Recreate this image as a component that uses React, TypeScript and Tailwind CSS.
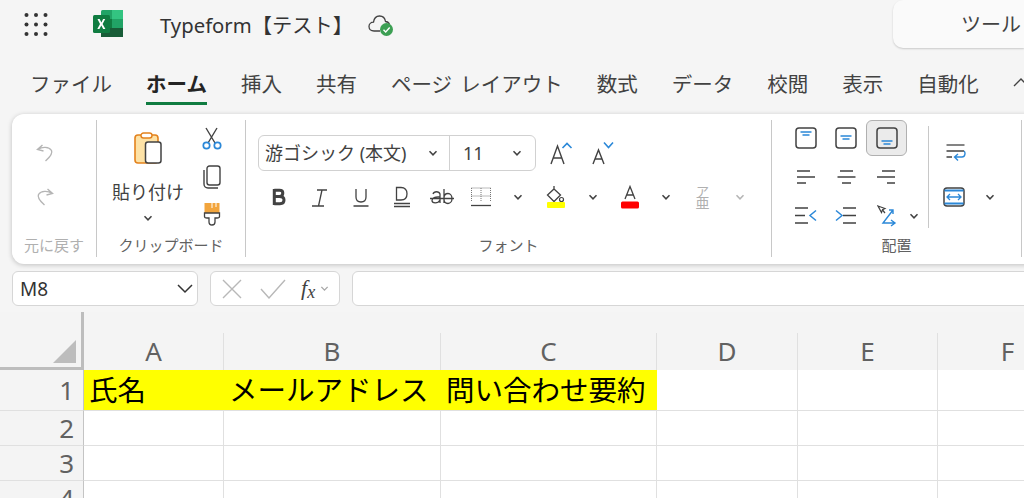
import type { ReactNode } from 'react';

const DARK = '#424242';
const BLUE = '#2b88d8';

function Chevron({ color = DARK, size = 10 }: { color?: string; size?: number }) {
  return (
    <svg width={size} height={size} viewBox="0 0 10 10" fill="none" stroke={color} strokeWidth="1.5">
      <path d="M1.5 3.2 L5 6.8 L8.5 3.2" />
    </svg>
  );
}

function Waffle() {
  const spots = [0, 1, 2];
  return (
    <svg width="24" height="24" viewBox="0 0 24 24" fill="#333">
      {spots.map((row) =>
        spots.map((col) => <circle key={`${row}-${col}`} cx={2.5 + col * 9.5} cy={3 + row * 9.5} r="2" />)
      )}
    </svg>
  );
}

function ExcelLogo() {
  return (
    <svg width="30" height="28" viewBox="0 0 30 28">
      <rect x="8" y="0" width="22" height="27" rx="1.5" fill="#21a366" />
      <rect x="19" y="0" width="11" height="9" fill="#33c481" />
      <rect x="19" y="9" width="11" height="9" fill="#21a366" />
      <rect x="8" y="9" width="11" height="9" fill="#107c41" />
      <rect x="8" y="18" width="22" height="9" fill="#185c37" />
      <rect x="0" y="5" width="17" height="18" rx="1.5" fill="#107c41" />
      <path d="M4.5 9 L7 14 L4.3 19 H6.4 L8.3 15.6 L10.2 19 H12.4 L9.6 14 L12.2 9 H10.1 L8.4 12.4 L6.6 9 Z" fill="#fff" />
    </svg>
  );
}

function CloudCheck() {
  return (
    <svg width="26" height="24" viewBox="0 0 26 24" fill="none">
      <path
        d="M12 18 H6 C3 18 1 16 1 13.5 C1 11 3 9.2 5.5 9.2 C6 5.5 8.5 3 11.5 3 C14.5 3 17 5.2 17.5 8.5 C19.5 8.7 21 10 21.5 11.5"
        stroke="#424242"
        strokeWidth="1.3"
      />
      <circle cx="18.5" cy="16.5" r="6.5" fill="#3c9f53" />
      <path d="M15.5 16.7 L17.7 18.9 L21.7 14.6" stroke="#fff" strokeWidth="1.4" />
    </svg>
  );
}

function Undo({ flip = false }: { flip?: boolean }) {
  return (
    <svg width="20" height="20" viewBox="0 0 20 20" fill="none" stroke="#b5b5b5" strokeWidth="1.4" className={flip ? '-scale-x-100' : ''}>
      <path d="M7.5 2 L2.5 6.5 L8.5 8 M3 6.5 C7 3.5 14 3.5 16.5 7.5 C18 10.5 15 14 10.5 18" />
    </svg>
  );
}

function PasteIcon() {
  return (
    <svg width="28" height="32" viewBox="0 0 28 32" fill="none">
      <rect x="1" y="3" width="23" height="28" rx="3" fill="#fde2a6" stroke="#e3821d" strokeWidth="1.6" />
      <rect x="7" y="1" width="11" height="5" rx="2.5" fill="#fff" stroke="#e3821d" strokeWidth="1.4" />
      <rect x="11.5" y="10" width="15.5" height="21" rx="2.5" fill="#fff" stroke="#424242" strokeWidth="1.5" />
    </svg>
  );
}

function ScissorsIcon() {
  return (
    <svg width="20" height="24" viewBox="0 0 20 24" fill="none">
      <path d="M4 1 L13 16 M15 1 L6 16" stroke="#424242" strokeWidth="1.4" />
      <circle cx="4.5" cy="18.5" r="3.2" stroke={BLUE} strokeWidth="1.7" />
      <circle cx="15.5" cy="18.5" r="3.2" stroke={BLUE} strokeWidth="1.7" />
    </svg>
  );
}

function CopyIcon() {
  return (
    <svg width="20" height="24" viewBox="0 0 20 24" fill="none" stroke="#424242" strokeWidth="1.4">
      <rect x="5" y="1" width="13" height="19" rx="2.5" />
      <path d="M2 5 V19 C2 21 3.5 23 6 23 H16" />
    </svg>
  );
}

function BrushIcon() {
  return (
    <svg width="18" height="24" viewBox="0 0 18 24" fill="none">
      <path d="M1.5 1 H16.5 V11 H1.5 Z" fill="#f2a53d" />
      <path d="M9 1 V6 M13 1 V5" stroke="#fff" strokeWidth="1" />
      <path d="M1.5 11 H16.5 V14.5 C16.5 15.5 15.5 16 14 16 H12 V20 C12 22 10.5 23 9 23 C7.5 23 6 22 6 20 V16 H4 C2.5 16 1.5 15.5 1.5 14.5 Z" fill="#fff" stroke="#424242" strokeWidth="1.3" />
    </svg>
  );
}

function BoldIcon() {
  return (
    <svg width="14" height="18" viewBox="0 0 14 18" fill="none" stroke="#424242" strokeWidth="3">
      <path d="M2.3 1 V17 M2.3 2.3 H7.5 C10 2.3 10.8 3.5 10.8 5 C10.8 7 9.8 8.5 7.5 8.5 H2.3 M7.5 8.5 C10.5 8.5 12 10 12 12 C12 14.5 10.5 15.7 8 15.7 H2.3" />
    </svg>
  );
}

function ItalicIcon() {
  return (
    <svg width="18" height="20" viewBox="0 0 18 20" fill="none" stroke="#424242" strokeWidth="1.3">
      <path d="M1 19 H13 M6 3 H16 M11 3 L7.5 19" />
    </svg>
  );
}

function UnderlineIcon() {
  return (
    <svg width="16" height="20" viewBox="0 0 16 20" fill="none" stroke="#424242" strokeWidth="1.3">
      <path d="M3 2 V10 C3 13 5 15 8 15 C11 15 13 13 13 10 V2 M0.5 19 H15.5" />
    </svg>
  );
}

function DoubleUnderlineIcon() {
  return (
    <svg width="18" height="22" viewBox="0 0 18 22" fill="none" stroke="#424242" strokeWidth="1.3">
      <path d="M3.5 1.5 V14 H8 C12 14 14 11.5 14 7.7 C14 4 12 1.5 8 1.5 Z M1 17.5 H17 M1 20.5 H17" />
    </svg>
  );
}

function StrikeIcon() {
  return (
    <svg width="24" height="20" viewBox="0 0 24 20" fill="none" stroke="#424242" strokeWidth="1.3">
      <path d="M3 7 C4 4 9 4 10 7 V16 M10 10 C5 9.5 2 11 2 13.5 C2 16.5 8 17 10 13 M14 2 V16 M14 11 C14 8 16 6.5 18 6.5 C20.5 6.5 22 9 22 11.5 C22 14 20.5 16.5 18 16.5 C16 16.5 14 15 14 12 M0 11.5 H24" />
    </svg>
  );
}

function BorderIcon() {
  return (
    <svg width="20" height="20" viewBox="0 0 20 20" fill="none" stroke="#777">
      <path d="M0.5 1 H19.5 M0.5 9 H19.5 M0.5 1 V15 M10 1 V15 M19.5 1 V15" strokeDasharray="1 1" strokeWidth="1" />
      <path d="M0 18.5 H20" stroke="#424242" strokeWidth="1.3" />
    </svg>
  );
}

function FillIcon() {
  return (
    <svg width="20" height="24" viewBox="0 0 20 24" fill="none">
      <path d="M8 1 V4 M8 4 L14.5 10 L8 16.5 L1.5 10 Z" stroke="#424242" strokeWidth="1.3" />
      <circle cx="15.5" cy="14.5" r="2" stroke="#424242" strokeWidth="1.2" />
      <rect x="1" y="17" width="18" height="6" rx="1" fill="#ffff00" />
    </svg>
  );
}

function FontColorIcon() {
  return (
    <svg width="20" height="24" viewBox="0 0 20 24" fill="none">
      <path d="M5 14 L10 1.5 L15 14 M6.5 10 H13.5" stroke="#424242" strokeWidth="1.3" />
      <rect x="1" y="16.5" width="18" height="7" rx="1.5" fill="#ff0000" />
    </svg>
  );
}

function Growth({ up }: { up: boolean }) {
  return (
    <svg width="24" height="24" viewBox="0 0 24 24" fill="none">
      {up ? (
        <path d="M2 23 L8.5 5 L15 23 M4.5 17 H12.5" stroke="#424242" strokeWidth="1.4" />
      ) : (
        <path d="M3 23 L8.5 9 L14 23 M5 18 H12" stroke="#424242" strokeWidth="1.4" />
      )}
      {up ? (
        <path d="M13.5 7 L18 2.5 L22.5 7" stroke={BLUE} strokeWidth="1.6" />
      ) : (
        <path d="M14 1.5 L18.5 6.5 L23 1.5" stroke={BLUE} strokeWidth="1.6" />
      )}
    </svg>
  );
}

function VerticalAlign({ pos }: { pos: 'top' | 'middle' | 'bottom' }) {
  const lineY = pos === 'top' ? 5 : pos === 'middle' ? 9 : 14;
  return (
    <svg width="22" height="22" viewBox="0 0 22 22" fill="none">
      <rect x="1" y="1" width="20" height="20" rx="3" stroke="#424242" strokeWidth="1.5" />
      <path d={`M5.5 ${lineY} H16.5 M7.5 ${lineY + 3} H14.5`} stroke={BLUE} strokeWidth="1.3" />
    </svg>
  );
}

function HorizontalAlign({ pos }: { pos: 'left' | 'center' | 'right' }) {
  const d =
    pos === 'left'
      ? 'M1 1 H14 M1 7 H19 M1 13 H10'
      : pos === 'center'
      ? 'M3 1 H16 M0.5 7 H18.5 M5 13 H14'
      : 'M5 1 H18 M0 7 H18 M10 13 H18';
  return (
    <svg width="19" height="14" viewBox="0 0 19 14" fill="none" stroke="#424242" strokeWidth="1.3">
      <path d={d} />
    </svg>
  );
}

function Indent({ more }: { more: boolean }) {
  return (
    <svg width="22" height="18" viewBox="0 0 22 18" fill="none">
      {more ? (
        <>
          <path d="M8 1 H21 M8 8.5 H21 M8 16 H21" stroke="#424242" strokeWidth="1.3" />
          <path d="M1 3.5 L7 8.5 L1 13.5" stroke={BLUE} strokeWidth="1.5" />
        </>
      ) : (
        <>
          <path d="M0 1 H13 M0 8.5 H10 M0 16 H13" stroke="#424242" strokeWidth="1.3" />
          <path d="M21 3.5 L15 8.5 L21 13.5" stroke={BLUE} strokeWidth="1.5" />
        </>
      )}
    </svg>
  );
}

function OrientationIcon() {
  return (
    <svg width="20" height="22" viewBox="0 0 20 22" fill="none">
      <path d="M1 1 L8 3.5 L5.5 4.8 L4.5 7.5 Z" stroke="#424242" strokeWidth="1.2" />
      <path d="M5.5 5 L8 8" stroke="#424242" strokeWidth="1.2" />
      <path d="M16 5 L6 18 H18 M14 15 L18 18 L14 21 M12 5 H16 V9" stroke={BLUE} strokeWidth="1.4" />
    </svg>
  );
}

function WrapIcon() {
  return (
    <svg width="20" height="18" viewBox="0 0 20 18" fill="none">
      <path d="M0.5 1 H18.5" stroke="#424242" strokeWidth="1.3" />
      <path d="M0.5 7 H18 M0.5 13 H6" stroke="#424242" strokeWidth="1.3" />
      <path d="M18 7 C19.5 8 19.5 13 16 13 H9 M12 10 L8.5 13 L12 16.5" stroke={BLUE} strokeWidth="1.4" />
    </svg>
  );
}

function MergeIcon() {
  return (
    <svg width="22" height="20" viewBox="0 0 22 20" fill="none">
      <rect x="1" y="1" width="20" height="18" rx="3" stroke="#424242" strokeWidth="1.5" />
      <path d="M1.5 3.5 H20.5 M1.5 16.5 H20.5" stroke={BLUE} strokeWidth="2" />
      <path d="M4 10 H18 M7 7 L4 10 L7 13 M15 7 L18 10 L15 13" stroke={BLUE} strokeWidth="1.3" />
    </svg>
  );
}

function Btn({ w, children }: { w: string; children: ReactNode }) {
  return <div className={`${w} h-9 flex shrink-0 items-center justify-center`}>{children}</div>;
}

function GroupLabel({ children, color = 'text-[#616161]' }: { children: ReactNode; color?: string }) {
  return <div className={`h-6 mt-auto text-center text-[15px] leading-6 ${color}`}>{children}</div>;
}

const tabs = ['ファイル', 'ホーム', '挿入', '共有', 'ページ レイアウト', '数式', 'データ', '校閲', '表示', '自動化'];

const columns = [
  { name: 'A', text: '氏名' },
  { name: 'B', text: 'メールアドレス' },
  { name: 'C', text: '問い合わせ要約' },
  { name: 'D', text: '' },
  { name: 'E', text: '' },
  { name: 'F', text: '' },
];

const rowHeaderClass = 'border-r border-b border-r-[#c4c4c4] border-b-[#e0e0e0] bg-[#f4f4f4] pr-[9px] text-right text-[26px] text-[#616161]';

export default function App() {
  return (
    <div className="w-[1024px] h-[498px] overflow-hidden bg-[#f5f5f5] flex flex-col [font-family:'Noto_Sans','Noto_Sans_CJK_JP',sans-serif]">
      {/* Title bar */}
      <div className="h-[50px] flex shrink-0 items-start">
        <div className="ml-6 mt-[12px]">
          <Waffle />
        </div>
        <div className="ml-[45px] mt-[10px]">
          <ExcelLogo />
        </div>
        <div className="ml-[37px] mt-[10px] text-[20.3px] leading-[31px] text-[#333]">Typeform【テスト】</div>
        <div className="ml-[15px] mt-[13px]">
          <CloudCheck />
        </div>
        <div className="ml-auto w-[131px] h-[48px] shrink-0 rounded-l-[10px] bg-[#fafafa] shadow-[0_1px_2px_rgba(0,0,0,0.18)] pl-[68px] text-[20px] leading-[50px] whitespace-nowrap text-[#424242]">
          ツール
        </div>
      </div>

      {/* Tabs */}
      <div className="h-[64px] flex shrink-0 items-start gap-[34px] pl-[30px] pt-[19px] whitespace-nowrap">
        {tabs.map((tab) => (
          <div
            key={tab}
            className={
              tab === 'ホーム'
                ? 'h-9 border-b-[3px] border-[#107c41] text-[20.5px] leading-[30px] font-bold text-[#242424]'
                : 'h-9 border-b-[3px] border-transparent text-[20.5px] leading-[30px] [word-spacing:3px] text-[#424242]'
            }
          >
            {tab}
          </div>
        ))}
        <div className="pt-[9px]">
          <svg width="16" height="10" viewBox="0 0 16 10" fill="none" stroke="#424242" strokeWidth="1.4">
            <path d="M1 8 L8 1 L15 8" />
          </svg>
        </div>
      </div>

      {/* Ribbon */}
      <div className="ml-3 w-[1100px] h-[150px] shrink-0 flex rounded-[12px] bg-white py-[6px] shadow-[0_1px_5px_rgba(0,0,0,0.22)]">
        <div className="w-[85px] h-[137px] shrink-0 flex flex-col border-r border-[#c8c8c8]">
          <div className="w-[66px] pt-[15px] flex flex-col gap-2">
            <Btn w="w-full">
              <Undo />
            </Btn>
            <Btn w="w-full">
              <Undo flip />
            </Btn>
          </div>
          <GroupLabel color="text-[#b0b0b0]">元に戻す</GroupLabel>
        </div>

        <div className="w-[149px] h-[137px] shrink-0 flex flex-col border-r border-[#c8c8c8]">
          <div className="h-[113px] flex">
            <div className="w-[102px] pt-[12px] flex flex-col items-center">
              <PasteIcon />
              <div className="mt-[15px] text-[18px] leading-[27px] whitespace-nowrap text-[#424242]">貼り付け</div>
              <div className="mt-[7px]">
                <Chevron />
              </div>
            </div>
            <div className="w-[36px] ml-[-5px] flex flex-col items-center">
              <div className="h-[38px] flex items-center">
                <ScissorsIcon />
              </div>
              <div className="h-[38px] flex items-center">
                <CopyIcon />
              </div>
              <div className="h-[38px] flex items-center">
                <BrushIcon />
              </div>
            </div>
          </div>
          <GroupLabel>クリップボード</GroupLabel>
        </div>

        <div className="w-[526px] h-[137px] shrink-0 flex flex-col border-r border-[#c8c8c8]">
          <div className="pl-3 pt-[15px] flex">
            <div className="w-[278px] h-9 shrink-0 flex items-center rounded-[6px] border border-[#d1d1d1]">
              <div className="w-[191px] h-full shrink-0 flex items-center border-r border-[#d1d1d1] pl-[6px] pr-[11px]">
                <span className="text-[18px] leading-6 whitespace-nowrap text-[#424242]">游ゴシック (本文)</span>
                <span className="ml-auto">
                  <Chevron />
                </span>
              </div>
              <div className="flex-1 flex items-center pl-[13px] pr-[13px]">
                <span className="text-[18px] leading-6 text-[#424242]">11</span>
                <span className="ml-auto">
                  <Chevron />
                </span>
              </div>
            </div>
            <div className="ml-[5px] w-10 h-9 flex items-center justify-center">
              <Growth up />
            </div>
            <div className="ml-px w-10 h-9 flex items-center justify-center">
              <Growth up={false} />
            </div>
          </div>
          <div className="pl-3 mt-2 flex">
            <Btn w="w-[41px]">
              <BoldIcon />
            </Btn>
            <Btn w="w-[41px]">
              <ItalicIcon />
            </Btn>
            <Btn w="w-[41px]">
              <UnderlineIcon />
            </Btn>
            <Btn w="w-[41px]">
              <DoubleUnderlineIcon />
            </Btn>
            <Btn w="w-[40px]">
              <StrikeIcon />
            </Btn>
            <Btn w="w-[37px]">
              <BorderIcon />
            </Btn>
            <Btn w="w-[38px]">
              <Chevron />
            </Btn>
            <Btn w="w-[37px]">
              <FillIcon />
            </Btn>
            <Btn w="w-[37px]">
              <Chevron />
            </Btn>
            <Btn w="w-[37px]">
              <FontColorIcon />
            </Btn>
            <Btn w="w-[36px]">
              <Chevron />
            </Btn>
            <Btn w="w-[37px]">
              <div className="flex flex-col items-center text-[#b0b0b0]">
                <span className="h-[12px] text-[13px] leading-[12px]">ア</span>
                <span className="h-[12px] text-[14px] leading-[12px]">亜</span>
              </div>
            </Btn>
            <Btn w="w-[38px]">
              <Chevron color="#b5b5b5" />
            </Btn>
          </div>
          <GroupLabel>フォント</GroupLabel>
        </div>

        <div className="w-[250px] h-[137px] shrink-0 flex flex-col border-r border-[#c8c8c8]">
          <div className="h-[113px] flex">
            <div className="w-[156px] shrink-0 pl-[13px] flex flex-col gap-[3px]">
              <div className="flex">
                <Btn w="w-[41px]">
                  <VerticalAlign pos="top" />
                </Btn>
                <Btn w="w-[40px]">
                  <VerticalAlign pos="middle" />
                </Btn>
                <div className="w-[41px] h-9 flex items-center justify-center rounded-[6px] border border-[#b0b0b0] bg-[#ebebeb]">
                  <VerticalAlign pos="bottom" />
                </div>
              </div>
              <div className="flex">
                <Btn w="w-[41px]">
                  <HorizontalAlign pos="left" />
                </Btn>
                <Btn w="w-[40px]">
                  <HorizontalAlign pos="center" />
                </Btn>
                <Btn w="w-[41px]">
                  <HorizontalAlign pos="right" />
                </Btn>
              </div>
              <div className="flex h-[35px]">
                <Btn w="w-[41px]">
                  <Indent more={false} />
                </Btn>
                <Btn w="w-[40px]">
                  <Indent more />
                </Btn>
                <Btn w="w-[41px]">
                  <OrientationIcon />
                </Btn>
                <Btn w="w-[13px]">
                  <Chevron />
                </Btn>
              </div>
            </div>
            <div className="w-px h-[102px] mt-[6px] shrink-0 bg-[#c8c8c8]" />
            <div className="pt-[15px] flex flex-col gap-2">
              <Btn w="w-[54px]">
                <WrapIcon />
              </Btn>
              <div className="flex">
                <Btn w="w-[50px]">
                  <MergeIcon />
                </Btn>
                <Btn w="w-[22px]">
                  <Chevron />
                </Btn>
              </div>
            </div>
          </div>
          <GroupLabel>配置</GroupLabel>
        </div>
      </div>

      {/* Formula bar */}
      <div className="mt-[7px] h-[35px] shrink-0 flex gap-3 pl-3">
        <div className="w-[186px] shrink-0 flex items-center justify-between rounded-[6px] border border-[#d6d6d6] bg-white pl-[7px] pr-[2px]">
          <span className="text-[19px] leading-6 text-[#333]">M8</span>
          <svg width="20" height="12" viewBox="0 0 20 12" fill="none" stroke="#333" strokeWidth="1.5">
            <path d="M3 2 L10 9 L17 2" />
          </svg>
        </div>
        <div className="w-[130px] shrink-0 flex items-center rounded-[6px] border border-[#d6d6d6] bg-white pl-[11px]">
          <svg width="20" height="20" viewBox="0 0 20 20" fill="none" stroke="#b8b8b8" strokeWidth="1.4">
            <path d="M1 1 L19 19 M19 1 L1 19" />
          </svg>
          <svg className="ml-[18px]" width="26" height="20" viewBox="0 0 26 20" fill="none" stroke="#b8b8b8" strokeWidth="1.4">
            <path d="M1 10 L9 19 L25 1" />
          </svg>
          <span className="ml-[15px] text-[22px] leading-6 italic text-[#424242] [font-family:'Liberation_Serif',serif]">
            f<span className="relative top-[3px] text-[18px]">x</span>
          </span>
          <span className="ml-[5px]">
            <Chevron color="#a8a8a8" size={9} />
          </span>
        </div>
        <div className="w-[800px] shrink-0 rounded-[6px] border border-[#d6d6d6] bg-white" />
      </div>

      {/* Sheet */}
      <div className="mt-[6px] flex-1 grid grid-cols-[84px_140px_217px_216px_141px_140px_140px] grid-rows-[58px_41px_35px_35px_1fr] bg-white">
        <div className="flex items-end justify-end border-r-[3px] border-b-[3px] border-[#bdbdbd] bg-[#f4f4f4] pr-[5px] pb-[4px]">
          <svg width="23" height="23" viewBox="0 0 23 23" fill="#bdbdbd">
            <path d="M23 0 V23 H0 Z" />
          </svg>
        </div>
        {columns.map((col) => (
          <div key={col.name} className="bg-[#f4f4f4] pt-[21px]">
            <div className="h-[37px] border-r border-[#e0e0e0] text-center text-[26px] leading-[36px] text-[#616161]">{col.name}</div>
          </div>
        ))}

        <div className={`${rowHeaderClass} leading-[40px]`}>1</div>
        {columns.map((col) => (
          <div
            key={col.name}
            className={
              col.text
                ? 'bg-[#ffff00] border-b border-[#e0e0e0] pl-[5px] text-[28.5px] leading-[40px] whitespace-nowrap text-black'
                : 'border-r border-b border-[#e0e0e0]'
            }
          >
            {col.text}
          </div>
        ))}

        {['2', '3', '4'].map((row) => (
          <div key={row} className="contents">
            <div className={`${rowHeaderClass} leading-[34px]`}>{row}</div>
            {columns.map((col) => (
              <div key={col.name} className="border-r border-b border-[#e0e0e0]" />
            ))}
          </div>
        ))}
      </div>
    </div>
  );
}
